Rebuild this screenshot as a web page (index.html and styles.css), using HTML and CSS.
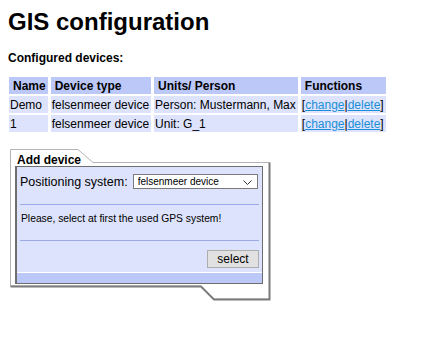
FILE: index.html
```html
<!DOCTYPE html>
<html>
<head>
<meta charset="utf-8">
<link rel="stylesheet" href="styles.css">
</head>
<body>
<h1 class="title">GIS configuration</h1>
<p class="subtitle">Configured devices:</p>
<table class="devices">
  <tr><th>Name</th><th>Device type</th><th>Units/ Person</th><th>Functions</th></tr>
  <tr><td>Demo</td><td>felsenmeer device</td><td>Person: Mustermann, Max</td><td>[<a href="#">change</a>|<a href="#">delete</a>]</td></tr>
  <tr><td>1</td><td>felsenmeer device</td><td>Unit: G_1</td><td>[<a href="#">change</a>|<a href="#">delete</a>]</td></tr>
</table>
<div class="addbox">
  <svg class="frame" width="262" height="152" viewBox="0 0 262 152">
    <polygon points="0.5,0.5 68,0.5 83,13.5 259.5,13.5 259.5,150 204,150 191,137 0.5,137" fill="#fff" stroke="#b4b4b4" stroke-width="1"/>
    <polyline points="259.5,13.5 259.5,150.5 204,150.5 191,137.5 0.5,137.5" fill="none" stroke="#7a7a7a" stroke-width="2"/>
  </svg>
  <div class="tab">Add device</div>
  <div class="panel">
    <div class="row">
      <span class="label">Positioning system:</span>
      <span class="selwrap">
        <select class="sel"><option>felsenmeer device</option></select>
        <svg class="chev" width="9" height="6" viewBox="0 0 9 6"><polyline points="0.5,0.5 4.5,4.5 8.5,0.5" fill="none" stroke="#333" stroke-width="1"/></svg>
      </span>
    </div>
    <div class="sep"></div>
    <div class="msg">Please, select at first the used GPS system!</div>
    <div class="sep sep2"></div>
    <div class="actions"><button class="btn">select</button></div>
    <div class="footer"></div>
  </div>
</div>
</body>
</html>
```
FILE: styles.css
```css
body {
  margin: 8px;
  font-family: "Liberation Sans", Arial, sans-serif;
  color: #000;
  background: #fff;
}
.title {
  font-size: 24px;
  font-weight: bold;
  margin: 0;
  line-height: 28px;
}
.subtitle {
  font-size: 12px;
  font-weight: bold;
  margin: 15px 0 0 0;
  line-height: 14px;
}
.devices {
  border-collapse: separate;
  border-spacing: 3px 2px;
  margin: 10px 0 0 -2px;
  font-size: 12px;
}
.devices th {
  background: #bcc8f8;
  text-align: left;
  padding: 2px 2px 1px 4px;
  line-height: 14px;
  white-space: nowrap;
}
.devices td {
  background: #dde3fc;
  padding: 2px 2px 1px 1px;
  line-height: 14px;
  white-space: nowrap;
}
.devices a {
  color: #1a8fd8;
}
.addbox {
  position: relative;
  width: 262px;
  height: 152px;
  margin: 15px 0 0 2px;
  padding: 0;
  box-sizing: border-box;
}
.frame {
  position: absolute;
  left: 0;
  top: 0;
}
.tab {
  position: relative;
  font-size: 12px;
  font-weight: bold;
  padding: 5px 0 0 7px;
  height: 12px;
  line-height: 13px;
}
.panel {
  position: relative;
  margin: 0 0 0 5px;
  width: 248px;
  box-sizing: border-box;
  border: 1px solid #6e6e6e;
  border-left-width: 2px;
  background: #dde3fc;
  font-size: 10.3px;
}
.row {
  display: flex;
  align-items: center;
  padding: 7px 4px 0 3px;
  white-space: nowrap;
}
.label {
  font-size: 12.5px;
  margin-right: 5px;
}
.selwrap {
  position: relative;
  display: inline-block;
}
.sel {
  appearance: none;
  -webkit-appearance: none;
  width: 125px;
  height: 15px;
  border: 1px solid #7a7a7a;
  border-radius: 0;
  background: #fff;
  font-family: "Liberation Sans", Arial, sans-serif;
  font-size: 10px;
  padding: 0 0 0 4px;
  margin: 0;
  color: #000;
  display: block;
}
.chev {
  position: absolute;
  right: 6px;
  top: 6px;
}
.sep {
  border-top: 1px solid #9aabe8;
  margin: 15px 3px 0 3px;
}
.msg {
  padding: 7px 0 0 4px;
  line-height: 13px;
}
.sep2 {
  margin-top: 15px;
}
.actions {
  display: flex;
  justify-content: flex-end;
  padding: 9px 3px 0 0;
}
.btn {
  font-family: "Liberation Sans", Arial, sans-serif;
  font-size: 12px;
  background: #e1e1e1;
  border: 1px solid #adadad;
  width: 52px;
  height: 18px;
  padding: 0;
  color: #000;
}
.footer {
  margin-top: 4px;
  border-top: 1px solid #fff;
  height: 10px;
  background: #bcc8f8;
}
```
